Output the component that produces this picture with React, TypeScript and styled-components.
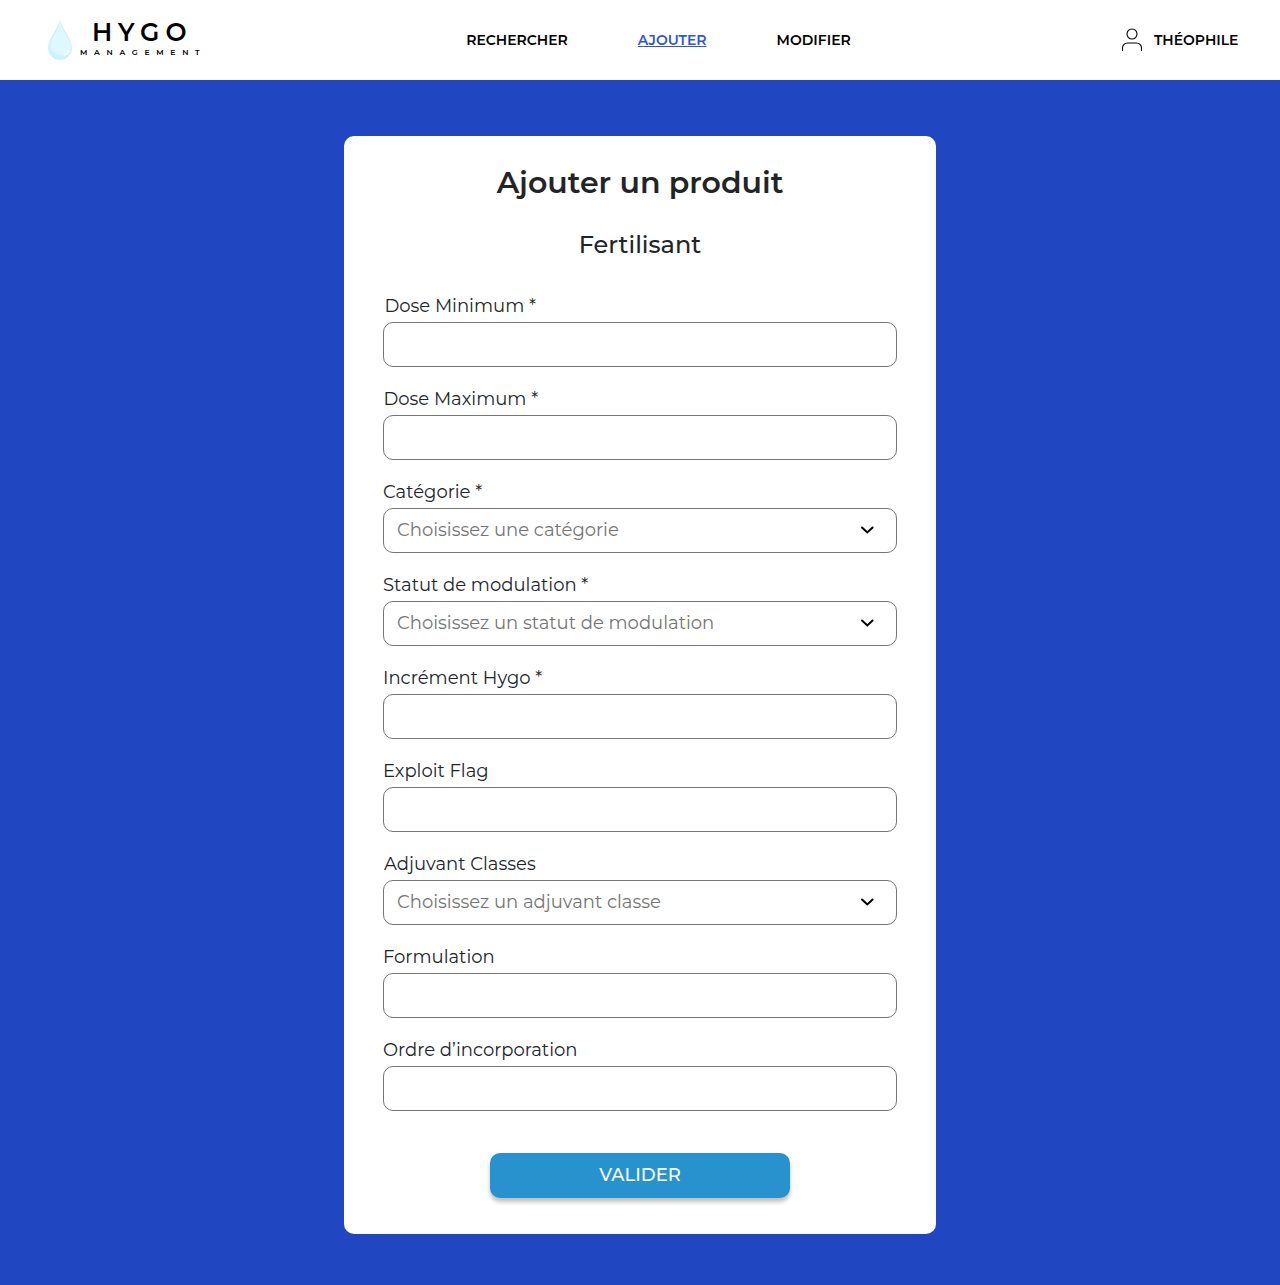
import React from 'react';
import styled, { createGlobalStyle } from 'styled-components';

const GlobalStyle = createGlobalStyle`
  *, *::before, *::after { box-sizing: border-box; }
  body {
    margin: 0;
    background: #2146c2;
    color: #212529;
    font-family: Montserrat, Inter, 'Liberation Sans', sans-serif;
  }
`;

const Page = styled.div`
  min-height: 1285px;
  display: flex;
  flex-direction: column;
`;

const Header = styled.header`
  height: 80px;
  display: flex;
  justify-content: space-between;
  align-items: center;
  padding: 0 41.5px 0 48px;
  background: #fff;
`;

const Brand = styled.a`
  display: flex;
  align-items: flex-start;
  width: 148px;
  height: 40px;
  color: #000;
`;

const DropIcon = styled.svg`
  width: 24px;
  height: 40px;
  flex: none;
`;

const BrandText = styled.div`
  display: flex;
  flex-direction: column;
  padding-left: 8px;
`;

const BrandName = styled.span`
  padding: 0 0 0 12px;
  font-size: 25px;
  font-weight: 600;
  line-height: 25px;
  letter-spacing: 6.2px;
  white-space: nowrap;
`;

const BrandSub = styled.span`
  font-size: 7.7px;
  font-weight: 600;
  line-height: 15px;
  letter-spacing: 6.7px;
  white-space: nowrap;
`;

const Nav = styled.nav`
  display: flex;
  gap: 70px;
`;

const NavLink = styled.a<{ $active?: boolean }>`
  font-size: 14px;
  font-weight: 600;
  line-height: 20px;
  color: ${(p) => (p.$active ? '#3156d8' : '#000')};
  text-decoration: ${(p) => (p.$active ? 'underline' : 'none')};
`;

const User = styled.div`
  display: flex;
  align-items: center;
  gap: 11px;
`;

const UserIcon = styled.svg`
  width: 22px;
  height: 24px;
`;

const Main = styled.main`
  display: flex;
  justify-content: center;
  padding: 56px 0 51px;
`;

const Card = styled.form`
  width: 592px;
  height: 1098px;
  display: flex;
  flex-direction: column;
  align-items: center;
  padding: 27px 39px 36px;
  border-radius: 10px;
  background: #fff;
`;

const Title = styled.h1`
  margin: 0;
  font-size: 30px;
  font-weight: 600;
  line-height: 40px;
`;

const Subtitle = styled.h2`
  margin: 27px 0 0;
  font-size: 24px;
  font-weight: 500;
  line-height: 30px;
`;

const Fields = styled.div`
  width: 100%;
  display: flex;
  flex-direction: column;
  gap: 20px;
  margin-top: 34px;
`;

const Field = styled.div`
  height: 73px;
  display: flex;
  flex-direction: column;
  justify-content: space-between;
`;

const Label = styled.label<{ $inset?: number }>`
  padding-left: ${(p) => p.$inset ?? 0}px;
  font-size: 18px;
  font-weight: 400;
  line-height: 24px;
`;

const Box = styled.div`
  height: 45px;
  display: flex;
  align-items: center;
  justify-content: space-between;
  padding: 0 21px 1px 13px;
  border: 1px solid #767676;
  border-radius: 10px;
`;

const Placeholder = styled.span`
  color: #757575;
  font-size: 18px;
  font-weight: 400;
  line-height: 24px;
`;

const Chevron = styled.svg`
  width: 16px;
  height: 12px;
`;

const Submit = styled.button`
  width: 300px;
  height: 45px;
  margin-top: auto;
  padding: 0 0 1px;
  border: 0;
  border-radius: 10px;
  background: #2892cf;
  box-shadow: 0 4px 4px rgba(0, 0, 0, 0.25);
  color: #fff;
  font-family: inherit;
  font-size: 18px;
  font-weight: 500;
`;

type FieldSpec = { label: string; inset?: number; placeholder?: string };

const fields: FieldSpec[] = [
  { label: 'Dose Minimum *', inset: 1.4 },
  { label: 'Dose Maximum *', inset: 0.4 },
  { label: 'Catégorie *', placeholder: 'Choisissez une catégorie' },
  { label: 'Statut de modulation *', placeholder: 'Choisissez un statut de modulation' },
  { label: 'Incrément Hygo *' },
  { label: 'Exploit Flag' },
  { label: 'Adjuvant Classes', inset: 1, placeholder: 'Choisissez un adjuvant classe' },
  { label: 'Formulation' },
  { label: 'Ordre d’incorporation' },
];

export default function App() {
  return (
    <Page>
      <GlobalStyle />
      <Header>
        <Brand>
          <DropIcon viewBox="0 0 24 40">
            <path d="M12 0C10.500 7 0 19 0 28a12 12 0 0 0 24 0C24 19 13.500 7 12 0Z" fill="#caf2ff" />
            <path d="M12 2C11 8 3 19 2.500 26.500a10.500 10.500 0 0 0 20.500 1.500C23 20 13.500 9 12 2Z" fill="#dff7ff" />
            <path d="M20.800 31c-.7 2-2 3.300-4 4" fill="none" stroke="#fff" strokeWidth="1.800" strokeLinecap="round" />
          </DropIcon>
          <BrandText>
            <BrandName>HYGO</BrandName>
            <BrandSub>MANAGEMENT</BrandSub>
          </BrandText>
        </Brand>
        <Nav>
          <NavLink>RECHERCHER</NavLink>
          <NavLink $active>AJOUTER</NavLink>
          <NavLink>MODIFIER</NavLink>
        </Nav>
        <User>
          <UserIcon viewBox="0 0 22 24" fill="none" stroke="#000" strokeWidth="1.100" strokeLinecap="round">
            <circle cx="11" cy="6" r="5" />
            <path d="M1.500 22.500V20a5 5 0 0 1 5-5h9a5 5 0 0 1 5 5v2.500" />
          </UserIcon>
          <NavLink>THÉOPHILE</NavLink>
        </User>
      </Header>
      <Main>
        <Card>
          <Title>Ajouter un produit</Title>
          <Subtitle>Fertilisant</Subtitle>
          <Fields>
            {fields.map((f) => (
              <Field key={f.label}>
                <Label $inset={f.inset}>{f.label}</Label>
                <Box>
                  {f.placeholder && (
                    <>
                      <Placeholder>{f.placeholder}</Placeholder>
                      <Chevron viewBox="0 0 16 12" fill="none" stroke="#000" strokeWidth="2" strokeLinecap="round">
                        <path d="m3 3.500 5.300 5 5.300-5" />
                      </Chevron>
                    </>
                  )}
                </Box>
              </Field>
            ))}
          </Fields>
          <Submit type="button">VALIDER</Submit>
        </Card>
      </Main>
    </Page>
  );
}
